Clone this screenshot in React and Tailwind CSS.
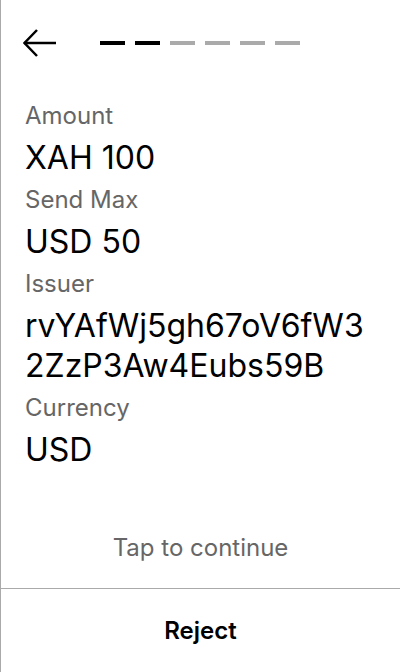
import React from 'react';

const fields = [
  { label: 'Amount', value: 'XAH 100' },
  { label: 'Send Max', value: 'USD 50' },
  { label: 'Issuer', value: 'rvYAfWj5gh67oV6fW32ZzP3Aw4Eubs59B' },
  { label: 'Currency', value: 'USD' },
];

const BackArrow = () => (
  <svg width="34" height="28" viewBox="0 0 34 28" fill="none" stroke="#000" strokeWidth="2.5">
    <path d="M1 14H33" />
    <path d="M14 1L1.5 14L14 27" />
  </svg>
);

export default function App() {
  return (
    <div
      className="h-[672px] w-[400px] flex flex-col bg-white border-l border-[#aaaaaa] text-black"
      style={{ fontFamily: 'Inter, "Noto Sans", sans-serif' }}
    >
      {/* header */}
      <div className="h-[86px] flex items-center pl-[22px]">
        <BackArrow />
        <div className="ml-[43px] flex gap-[10px]">
          {[0, 1, 2, 3, 4, 5].map((i) => (
            <div key={i} className={`h-[4px] w-[25px] ${i < 2 ? 'bg-black' : 'bg-[#aaaaaa]'}`} />
          ))}
        </div>
      </div>

      {/* details */}
      <div className="flex-1 px-6 pt-[16px] flex flex-col gap-2">
        {fields.map((f) => (
          <div key={f.label} className="flex flex-col gap-2">
            <div className="text-[24px] leading-[28px] text-[#666666]">{f.label}</div>
            <div className="text-[32px] leading-[40px] break-all">{f.value}</div>
          </div>
        ))}
      </div>

      <div className="text-center text-[24px] leading-[30px] text-[#666666] mb-[25px]">Tap to continue</div>

      <div className="h-[84px] border-t border-[#aaaaaa] flex items-center justify-center">
        <span className="text-[24px] font-semibold">Reject</span>
      </div>
    </div>
  );
}
